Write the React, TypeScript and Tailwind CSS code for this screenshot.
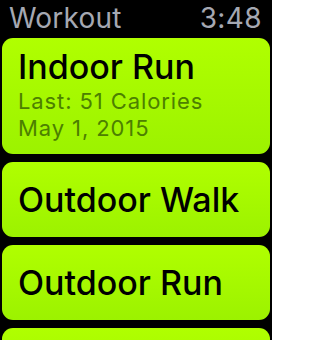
import React from "react"

const workouts = [
  { name: "Indoor Run", last: "Last: 51 Calories", date: "May 1, 2015" },
  { name: "Outdoor Walk" },
  { name: "Outdoor Run" },
  { name: "Outdoor Cycle" },
]

export default function App() {
  return (
    <div
      className="w-[272px] h-[340px] overflow-hidden bg-black"
      style={{ fontFamily: "Inter, 'Noto Sans', sans-serif" }}
    >
      <div className="h-[38px] flex items-start justify-between pl-[9px] pr-[10px] pt-[1px]">
        <span className="text-[28px] leading-[34px] tracking-[0.2px] text-[#a5a8b2]">Workout</span>
        <span className="text-[28px] leading-[34px] tracking-[0.4px] text-[#a5a8b2]">3:48</span>
      </div>

      <div className="flex flex-col gap-2 px-[2px]">
        {workouts.map((w) =>
          w.last ? (
            <div
              key={w.name}
              className="h-[116px] shrink-0 rounded-[11px] bg-gradient-to-b from-[#b0ff00] to-[#9cf200] px-[16px] pt-[8px]"
            >
              <div className="text-[34px] leading-[42px] font-medium text-black whitespace-nowrap">{w.name}</div>
              <div className="text-[22px] leading-[27px] tracking-[0.9px] text-[#4c8000] whitespace-nowrap">{w.last}</div>
              <div className="text-[22px] leading-[27px] tracking-[0.9px] text-[#4c8000] whitespace-nowrap">{w.date}</div>
            </div>
          ) : (
            <div
              key={w.name}
              className="h-[75px] shrink-0 rounded-[11px] bg-gradient-to-b from-[#b0ff00] to-[#9cf200] px-[16px] flex items-center"
            >
              <span className="text-[34px] leading-[42px] font-medium text-black whitespace-nowrap">{w.name}</span>
            </div>
          )
        )}
      </div>
    </div>
  )
}
